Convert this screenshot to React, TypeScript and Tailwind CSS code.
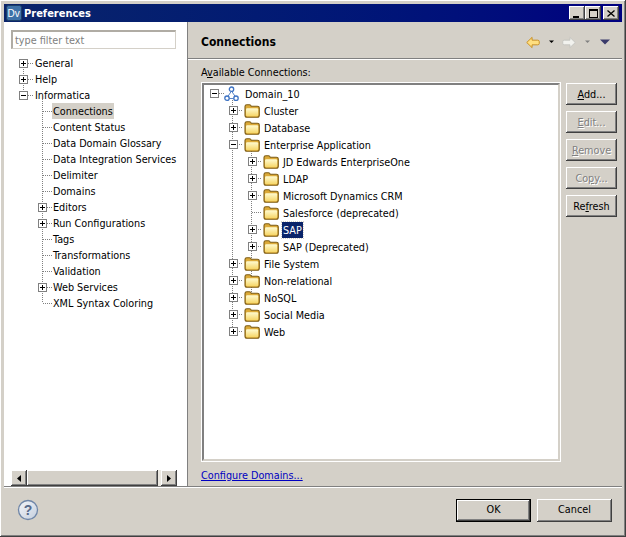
import React from "react";

const raised = "shadow-[inset_-1px_-1px_0_#404040,inset_1px_1px_0_#ffffff,inset_-2px_-2px_0_#808080,inset_2px_2px_0_#d4d0c8]";

function Expander({ open }: { open: boolean }) {
  return (
    <svg width="9" height="9" viewBox="0 0 9 9" className="block shrink-0" shapeRendering="crispEdges">
      <rect x="0.5" y="0.5" width="8" height="8" fill="#fff" stroke="#808080" />
      <path d={open ? "M2 4.5H7" : "M2 4.5H7M4.5 2V7"} stroke="#000" />
    </svg>
  );
}

function Folder() {
  return (
    <svg width="16" height="14" viewBox="0 0 16 14" className="block shrink-0">
      <defs>
        <linearGradient id="fold" x1="0" y1="0" x2="0" y2="1">
          <stop offset="0" stopColor="#fffbd0" />
          <stop offset="1" stopColor="#f6d565" />
        </linearGradient>
      </defs>
      <path d="M1 3.5V2.5Q1 0.8 2.8 0.8H5.5Q6.8 0.8 7.3 2.3H13.3Q15.3 2.3 15.3 4.2V11.3Q15.3 13.3 13.3 13.3H3Q1 13.3 1 11.3Z" fill="#dcaa38" stroke="#7d5c14" strokeWidth="1.1" />
      <path d="M2 5.6Q2 4.3 3.2 4.3H13Q14.2 4.3 14.2 5.6V11Q14.2 12.3 13 12.3H3.2Q2 12.3 2 11Z" fill="url(#fold)" />
    </svg>
  );
}

function DomainIcon() {
  return (
    <svg width="15" height="16" viewBox="0 0 15 16" className="block shrink-0">
      <path d="M7.5 5L3.5 11M7.5 5L11.5 11M3.5 12.5H11.5" stroke="#5a86c8" strokeWidth="1" fill="none" />
      <circle cx="7.5" cy="3.2" r="2.2" fill="#fff" stroke="#3f74c4" strokeWidth="1.3" />
      <circle cx="3" cy="12.2" r="2.2" fill="#fff" stroke="#3f74c4" strokeWidth="1.3" />
      <circle cx="12" cy="12.2" r="2.2" fill="#fff" stroke="#3f74c4" strokeWidth="1.3" />
    </svg>
  );
}

type PrefRow = { label: string; level: number; exp?: "open" | "closed"; selected?: boolean };
const prefRows: PrefRow[] = [
  { label: "General", level: 0, exp: "closed" },
  { label: "Help", level: 0, exp: "closed" },
  { label: "Informatica", level: 0, exp: "open" },
  { label: "Connections", level: 1, selected: true },
  { label: "Content Status", level: 1 },
  { label: "Data Domain Glossary", level: 1 },
  { label: "Data Integration Services", level: 1 },
  { label: "Delimiter", level: 1 },
  { label: "Domains", level: 1 },
  { label: "Editors", level: 1, exp: "closed" },
  { label: "Run Configurations", level: 1, exp: "closed" },
  { label: "Tags", level: 1 },
  { label: "Transformations", level: 1 },
  { label: "Validation", level: 1 },
  { label: "Web Services", level: 1, exp: "closed" },
  { label: "XML Syntax Coloring", level: 1 },
];

type ConnRow = { label: string; level: number; exp?: "open" | "closed"; selected?: boolean; domain?: boolean };
const connRows: ConnRow[] = [
  { label: "Domain_10", level: 0, exp: "open", domain: true },
  { label: "Cluster", level: 1, exp: "closed" },
  { label: "Database", level: 1, exp: "closed" },
  { label: "Enterprise Application", level: 1, exp: "open" },
  { label: "JD Edwards EnterpriseOne", level: 2, exp: "closed" },
  { label: "LDAP", level: 2, exp: "closed" },
  { label: "Microsoft Dynamics CRM", level: 2, exp: "closed" },
  { label: "Salesforce (deprecated)", level: 2 },
  { label: "SAP", level: 2, exp: "closed", selected: true },
  { label: "SAP (Deprecated)", level: 2, exp: "closed" },
  { label: "File System", level: 1, exp: "closed" },
  { label: "Non-relational", level: 1, exp: "closed" },
  { label: "NoSQL", level: 1, exp: "closed" },
  { label: "Social Media", level: 1, exp: "closed" },
  { label: "Web", level: 1, exp: "closed" },
];

function Dotted({ d }: { d: string }) {
  return <path d={d} stroke="#808080" strokeDasharray="1 1" fill="none" />;
}

function PrefTree() {
  return (
    <div className="relative mt-[33px] ml-[15px] flex flex-col">
      <svg width="160" height="256" className="absolute left-0 top-0" shapeRendering="crispEdges">
        <Dotted d="M4.5 12V40" />
        <Dotted d="M23.5 44V247" />
        <Dotted d="M9 8.5H14M9 24.5H14M9 40.5H14" />
        {prefRows.map((r, i) => r.level === 1 ? <Dotted key={i} d={`M${r.exp ? 28 : 24} ${8.5 + 16 * i}H33`} /> : null)}
      </svg>
      {prefRows.map((r) => (
        <div key={r.label} className="relative flex h-4 items-center">
          {r.level === 0 ? (
            <>
              <span className="w-[15px] shrink-0"><Expander open={r.exp === "open"} /></span>
              <span className="h-4 px-[1px] pt-[1px] leading-[15px]">{r.label}</span>
            </>
          ) : (
            <>
              <span className="ml-[19px] w-[14px] shrink-0">{r.exp && <Expander open={false} />}</span>
              <span className={`h-4 whitespace-nowrap px-[1px] pt-[1px] leading-[15px] ${r.selected ? "bg-[#d4d0c8]" : ""}`}>{r.label}</span>
            </>
          )}
        </div>
      ))}
    </div>
  );
}

function ConnTree() {
  return (
    <div className="relative flex flex-col pl-[6px]">
      <svg width="200" height="255" className="absolute left-0 top-0" shapeRendering="crispEdges">
        <Dotted d="M28.5 15V244" />
        <Dotted d="M47.5 60V212" />
        <Dotted d="M15 8.5H20" />
        {connRows.map((r, i) => r.level === 1 ? <Dotted key={i} d={`M33 ${8.5 + 17 * i}H39`} /> : null)}
        {connRows.map((r, i) => r.level === 2 ? <Dotted key={i} d={`M${r.exp ? 52 : 48} ${8.5 + 17 * i}H58`} /> : null)}
      </svg>
      {connRows.map((r) => (
        <div key={r.label} className="relative flex h-[17px] items-center">
          <span style={{ marginLeft: r.level * 19 }} className="w-[14px] shrink-0">
            {r.exp && <Expander open={r.exp === "open"} />}
          </span>
          {r.domain ? (
            <span className="mr-[5px]"><DomainIcon /></span>
          ) : (
            <span className="mr-[3px] ml-[1px]"><Folder /></span>
          )}
          <span className={`h-[16px] whitespace-nowrap px-[1px] pt-[1px] leading-[15px] ${r.selected ? "bg-[#0a246a] text-white outline-1 outline-dotted outline-[#d4d0c8]" : ""}`}>{r.label}</span>
        </div>
      ))}
    </div>
  );
}

function SideButton({ children, disabled }: { children: React.ReactNode; disabled?: boolean }) {
  return (
    <button className={`flex h-[22px] w-[51px] items-center justify-center pt-[2px] ${raised} ${disabled ? "text-[#808080] [text-shadow:1px_1px_0_#fff]" : "text-black"}`}>
      <span>{children}</span>
    </button>
  );
}

function Arrow({ fill, stroke, flip }: { fill: string; stroke: string; flip?: boolean }) {
  return (
    <svg width="14" height="13" viewBox="0 0 15 13" className={`block ${flip ? "-scale-x-100" : ""}`}>
      <path d="M0.8 6.5L6.5 1V4H12.5Q14.2 4 14.2 5.5V7.5Q14.2 9 12.5 9H6.5V12Z" fill={fill} stroke={stroke} />
    </svg>
  );
}

function Caret({ color, w = 5 }: { color: string; w?: number }) {
  return (
    <svg width={w} height={Math.ceil(w / 2) + 1} viewBox={`0 0 ${w} ${Math.ceil(w / 2)}`} className="block">
      <path d={`M0 0H${w}L${w / 2} ${w / 2}Z`} fill={color} />
    </svg>
  );
}

function CapButton({ children, className }: { children: React.ReactNode; className?: string }) {
  return (
    <div className={`flex h-[14px] w-4 items-center justify-center bg-[#d4d0c8] ${raised} ${className ?? ""}`}>{children}</div>
  );
}

export default function App() {
  return (
    <div className={`flex h-[537px] w-[626px] flex-col overflow-hidden bg-[#d4d0c8] p-1 text-[10.75px] text-[#000] [font-family:'DejaVu_Sans_Condensed','DejaVu_Sans',sans-serif] ${raised}`}>
      <div className="flex h-[18px] shrink-0 items-center bg-gradient-to-r from-[#0a246a] to-[#000080] pl-[2px] pr-[3px]">
        <svg width="16" height="16" viewBox="0 0 16 16" className="block">
          <rect x="0.5" y="0.5" width="15" height="15" rx="2" fill="#3f72a8" stroke="#1c3f68" />
          <text x="1.5" y="12" fontSize="10" fill="#fff" fontFamily="'Liberation Sans',sans-serif">Dv</text>
        </svg>
        <span className="ml-[2px] flex-1 pt-[2px] text-[11px] font-bold text-white">Preferences</span>
        <CapButton>
          <span className="mt-[7px] h-[2px] w-[6px] -translate-x-[1px] bg-black" />
        </CapButton>
        <CapButton>
          <span className="h-[9px] w-[9px] border border-t-2 border-black" />
        </CapButton>
        <CapButton className="ml-[2px]">
          <svg width="8" height="7" viewBox="0 0 8 7" className="block"><path d="M0.5 0.5L7.5 6.5M7.5 0.5L0.5 6.5" stroke="#000" strokeWidth="1.3" /></svg>
        </CapButton>
      </div>

      <div className="flex min-h-0 flex-1">
        <aside className="relative flex w-[183px] shrink-0 flex-col bg-white">
          <div className="absolute left-[7px] top-[8px] h-[19px] w-[165px] border border-t-2 border-l-2 border-[#b0aca4] border-b-[#d4d0c8] border-r-[#d4d0c8] pl-[2px] pt-[1px] leading-[16px] text-[#808080]">
            type filter text
          </div>
          <PrefTree />
          <div className="mt-auto ml-[7px] flex h-[16px] w-[166px]">
            <div className={`flex w-4 items-center justify-center ${raised} bg-[#d4d0c8]`}>
              <svg width="4" height="7" viewBox="0 0 4 7"><path d="M4 0V7L0 3.5Z" /></svg>
            </div>
            <div className={`w-[131px] bg-[#d4d0c8] ${raised}`} />
            <div className="w-[3px] bg-[#ece9e2]" />
            <div className={`flex w-4 items-center justify-center ${raised} bg-[#d4d0c8]`}>
              <svg width="4" height="7" viewBox="0 0 4 7"><path d="M0 0V7L4 3.5Z" /></svg>
            </div>
          </div>
        </aside>

        <main className="flex min-w-0 flex-1 flex-col border-l border-l-[#808080]">
          <div className="flex h-[37px] shrink-0 items-center border-b border-b-[#808080] pl-[13px] pr-[12px] pt-[4px] shadow-[0_1px_0_#ffffff]">
            <span className="flex-1 text-[12px] font-bold">Connections</span>
            <Arrow fill="#ffdf80" stroke="#c88c1c" />
            <span className="ml-[9px]"><Caret color="#000" /></span>
            <span className="ml-[8px]"><Arrow fill="#f2f2ee" stroke="#c4c4c0" flip /></span>
            <span className="ml-[9px]"><Caret color="#808080" /></span>
            <span className="ml-[10px]"><Caret color="#3a3a6a" w={10} /></span>
          </div>
          <div className="flex min-h-0 flex-1 pl-[14px] pr-[5px]">
            <div className="flex min-w-0 flex-1 flex-col">
              <div className="mt-[4px] -ml-[1px] h-[20px] leading-[19px]">A<u>v</u>ailable Connections:</div>
              <div className="h-[378px] w-[358px] border-2 border-t-[#808080] border-l-[#808080] border-b-[#d4d0c8] border-r-[#d4d0c8] bg-white shadow-[0_0_0_1px_#ffffff]">
                <ConnTree />
              </div>
              <a className="mt-[7px] -ml-[1px] text-[#0000c0] underline leading-[16px]">Configure Domains...</a>
            </div>
            <div className="ml-[6px] mt-[24px] flex w-[51px] flex-col gap-[6px]">
              <SideButton><u>A</u>dd...</SideButton>
              <SideButton disabled><u>E</u>dit...</SideButton>
              <SideButton disabled><u>R</u>emove</SideButton>
              <SideButton disabled>Co<u>p</u>y...</SideButton>
              <SideButton>Re<u>f</u>resh</SideButton>
            </div>
          </div>
        </main>
      </div>

      <footer className="flex h-[47px] shrink-0 items-center border-t border-t-[#808080] pl-[13px] pr-[10px] shadow-[inset_0_1px_0_#ffffff]">
        <svg width="22" height="22" viewBox="0 0 22 22" className="block">
          <defs>
            <linearGradient id="hb" x1="0" y1="0" x2="1" y2="1">
              <stop offset="0" stopColor="#f4f6fa" />
              <stop offset="1" stopColor="#c4cedd" />
            </linearGradient>
          </defs>
          <circle cx="11" cy="11" r="9.5" fill="url(#hb)" stroke="#6f86a8" strokeWidth="1.3" />
          <text x="11" y="16" textAnchor="middle" fontSize="14" fontWeight="700" fill="#56698a" fontFamily="'Liberation Sans',sans-serif">?</text>
        </svg>
        <div className="ml-auto flex gap-[6px]">
          <button className="h-[23px] w-[75px] border border-black">
            <span className={`flex h-full w-full items-center justify-center ${raised}`}>OK</span>
          </button>
          <button className={`h-[23px] w-[75px] ${raised}`}>Cancel</button>
        </div>
      </footer>
    </div>
  );
}
